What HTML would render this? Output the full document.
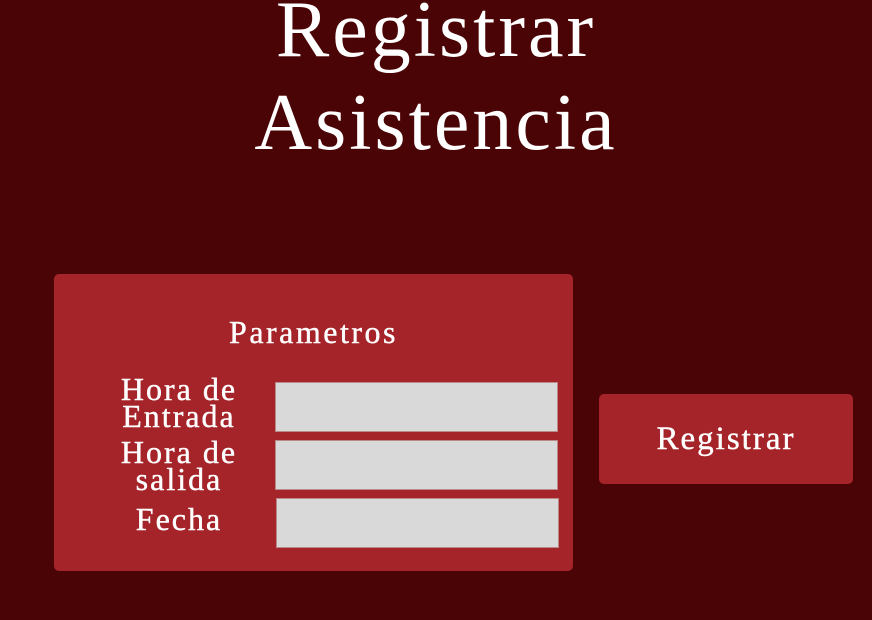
<!DOCTYPE html>
<html><head><style>
html,body{margin:0;padding:0;width:872px;height:620px;overflow:hidden;background:#4b0406;font-family:"Liberation Serif",serif;color:#fff}
.t{position:absolute;left:0;width:872px;text-align:center;font-size:80px;line-height:93px;top:-16px;letter-spacing:3px}
.panel{position:absolute;left:54px;top:274px;width:519px;height:297px;background:#a52429;border-radius:5px}
.ab{position:absolute}
.lbl{position:absolute;width:240px;left:59px;text-align:center;font-size:32px;line-height:27px;letter-spacing:2px;-webkit-text-stroke:0.4px #fff}
.in{position:absolute;background:#d9d9d9;width:281px;height:48px;border:1px solid #b88}
.btn{position:absolute;left:599px;top:394px;width:254px;height:90px;background:#a52429;border-radius:5px;text-align:center;line-height:90px;font-size:33px;letter-spacing:2px;-webkit-text-stroke:0.4px #fff}
</style></head><body>
<div class="t">Registrar<br>Asistencia</div>
<div class="panel"></div>
<div class="ab" style="left:54px;width:519px;top:314px;text-align:center;font-size:32px;letter-spacing:2.5px;-webkit-text-stroke:0.4px #fff">Parametros</div>
<div class="lbl" style="top:376px">Hora de<br>Entrada</div>
<div class="lbl" style="top:439px">Hora de<br>salida</div>
<div class="lbl" style="top:506px">Fecha</div>
<div class="in" style="left:275px;top:382px"></div>
<div class="in" style="left:275px;top:440px"></div>
<div class="in" style="left:276px;top:498px"></div>
<div class="btn">Registrar</div>
</body></html>
